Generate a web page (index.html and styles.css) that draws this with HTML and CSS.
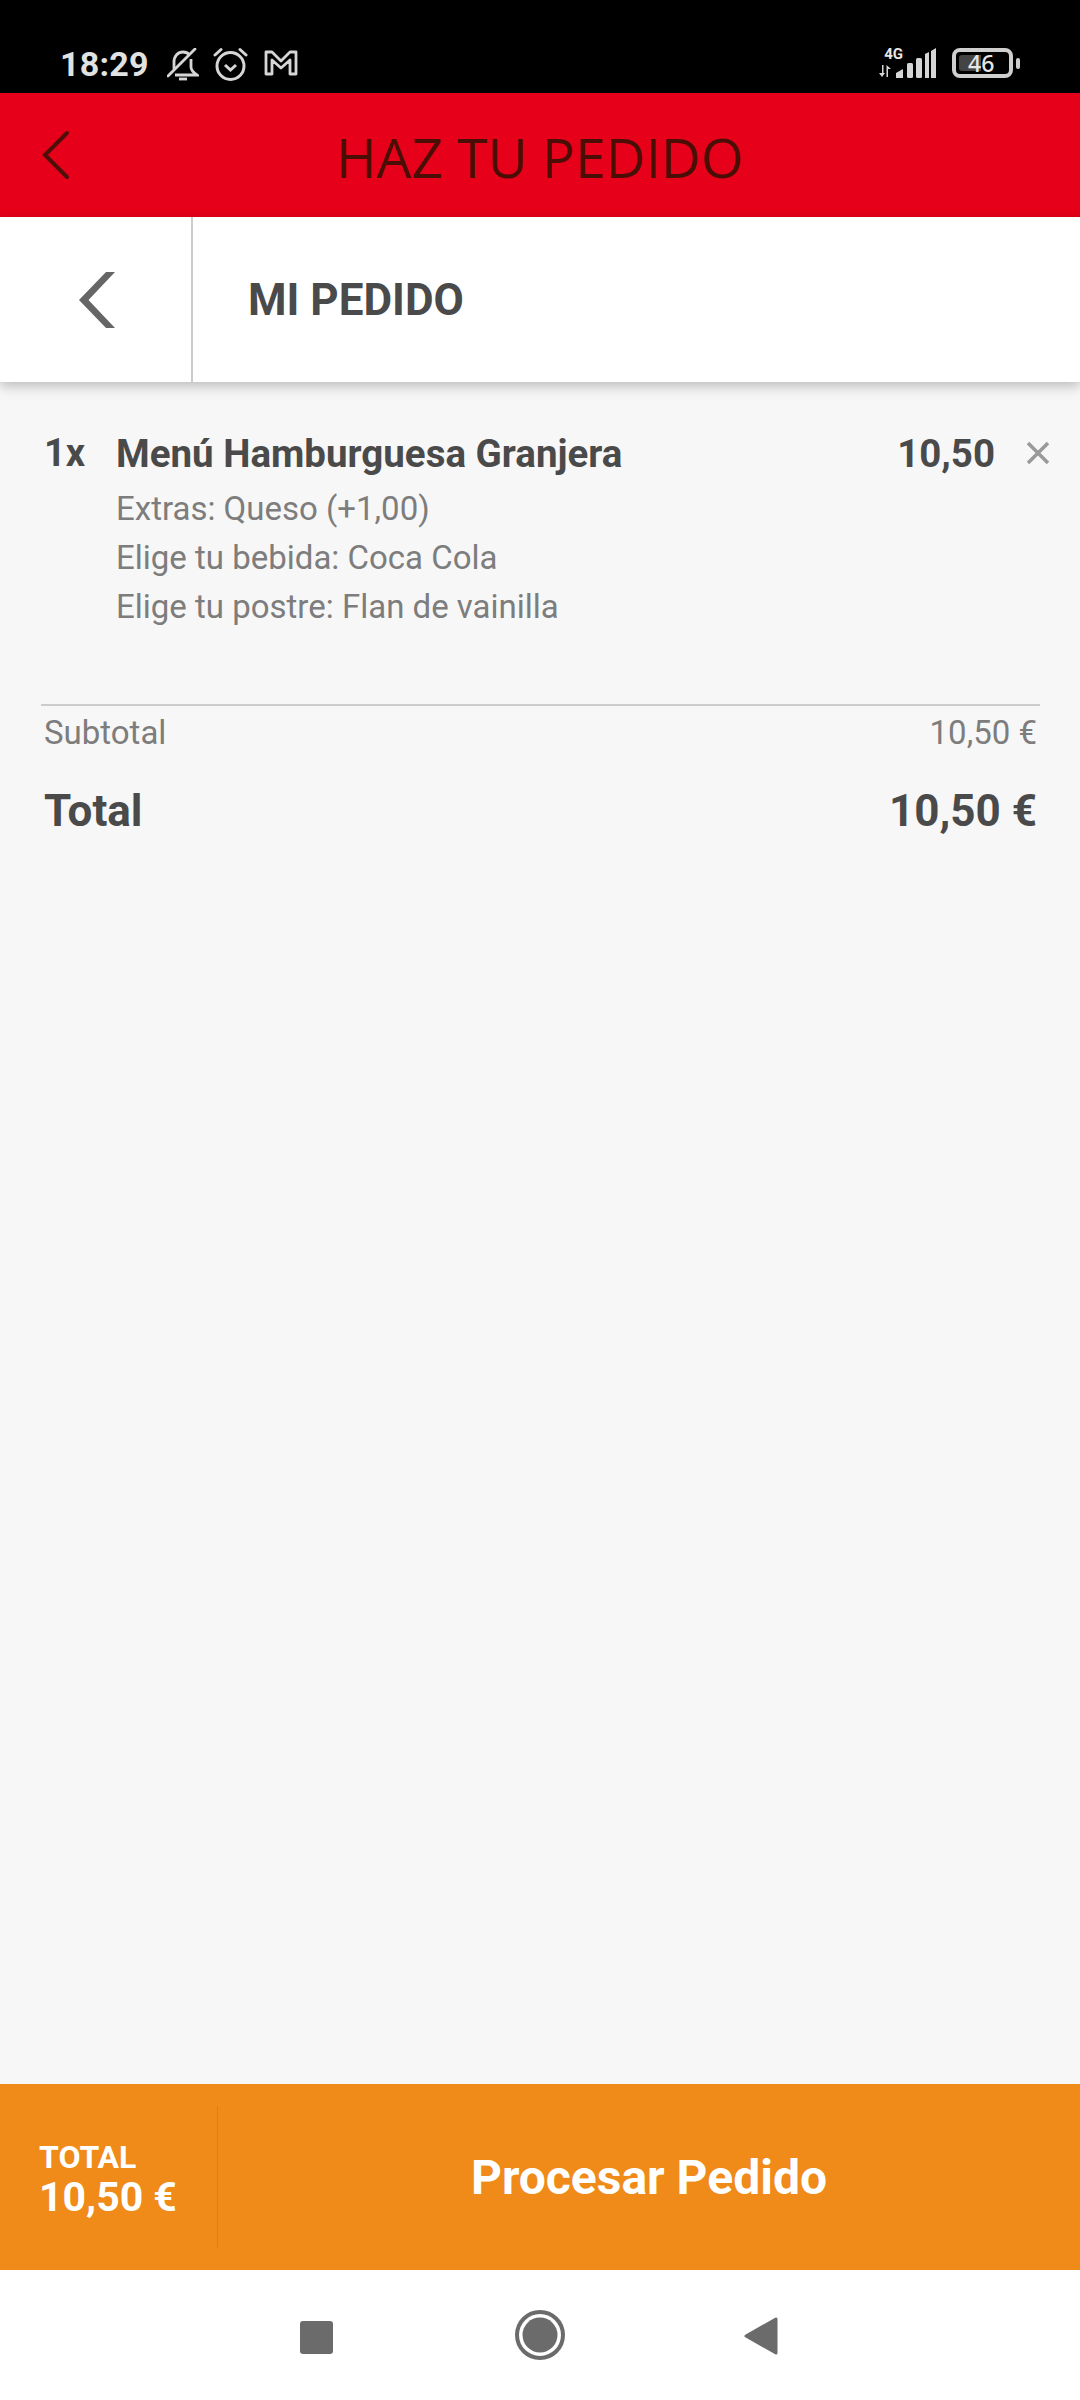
FILE: index.html
```html
<!DOCTYPE html>
<html lang="es">
<head>
<meta charset="UTF-8">
<meta name="viewport" content="width=device-width, initial-scale=1.0">
<title>Mi pedido</title>
<link rel="stylesheet" href="styles.css">
</head>
<body>

<div class="app">

<!-- Status bar -->
<div class="status-bar">
  <span class="time">18:29</span>
  <svg class="st-icon st-bell" width="32" height="33" viewBox="0 0 32 33" fill="none" stroke="#d6d6d6" stroke-width="2.8">
    <path d="M7 21 V14 C7 8 11 4 16 4 C19 4 21 5 23 7"/>
    <path d="M24 11 V19 C24 22 27 25 30 27 H8"/>
    <path d="M12 31 H20" stroke-width="2.8"/>
    <path d="M1 28 L28 1" stroke-linecap="round"/>
  </svg>
  <svg class="st-icon st-alarm" width="35" height="34" viewBox="0 0 35 34" fill="none" stroke="#d6d6d6" stroke-width="3">
    <circle cx="17.500" cy="19" r="13.500"/>
    <path d="M12 18 L17.500 23 L23 18"/>
    <path d="M2 8 L8 2.500 M27 2.500 L33 8" stroke-linecap="round"/>
  </svg>
  <svg class="st-icon st-m" width="34" height="26" viewBox="0 0 34 26" fill="none" stroke="#d6d6d6" stroke-width="2.8" stroke-linejoin="round">
    <path d="M2 2 H8 L17 11 L26 2 H32 V24 H26 V10 L17 18 L8 10 V24 H2 Z"/>
  </svg>
  <div class="spacer"></div>
  <div class="net">
    <span class="net-type">4G</span>
    <svg width="12" height="12" viewBox="0 0 12 12" fill="#d6d6d6">
      <path d="M3 0 H4.500 V8 H6 L3 12 L0 8 H3 Z M7.500 12 V0 L12 4 H9 V12 Z"/>
    </svg>
  </div>
  <svg class="signal" width="40" height="30" viewBox="0 0 40 30" fill="#d6d6d6">
    <path d="M0 30 V25 L7 21 V30 Z"/>
    <rect x="11" y="15" width="6" height="15" rx="1.500"/>
    <rect x="20" y="10" width="6" height="20" rx="1.500"/>
    <path d="M29 6 L33 4 V30 H29 Z M35 3 L40 0 V30 H35 Z"/>
  </svg>
  <div class="battery">
    <div class="battery-body">
      <div class="battery-fill"></div>
      <span class="battery-num">46</span>
    </div>
    <div class="battery-nub"></div>
  </div>
</div>

<!-- Top Bar with Title and Button -->
<div class="top-bar">
  <svg class="top-back" width="28" height="50" viewBox="0 0 28 50" fill="none" stroke="#4f0f08" stroke-width="4" stroke-linecap="round">
    <path d="M25 3 L3 25 L25 47"/>
  </svg>
  <h1 class="title">HAZ TU PEDIDO</h1>
</div>

<!-- Sub header -->
<div class="sub-bar">
  <div class="sub-back">
    <svg width="36" height="56" viewBox="0 0 36 56" fill="#666666">
      <path d="M27 0 H36 L9.500 28 L36 56 H27 L0 28 Z"/>
    </svg>
  </div>
  <h2 class="sub-title">MI PEDIDO</h2>
</div>

<!-- Order -->
<div class="order">
  <div class="item">
    <span class="item-qty">1x</span>
    <div class="item-info">
      <div class="item-name">Menú Hamburguesa Granjera</div>
      <div class="item-extra">Extras: Queso (+1,00)</div>
      <div class="item-extra">Elige tu bebida: Coca Cola</div>
      <div class="item-extra">Elige tu postre: Flan de vainilla</div>
    </div>
    <span class="item-price">10,50</span>
    <svg class="item-remove" width="24" height="24" viewBox="0 0 24 24" stroke="#999999" stroke-width="3.5">
      <path d="M2 2 L22 22 M22 2 L2 22"/>
    </svg>
  </div>

  <div class="totals">
    <div class="sub-row"><span>Subtotal</span><span>10,50 €</span></div>
    <div class="total-row"><span>Total</span><span>10,50 €</span></div>
  </div>
</div>

<!-- Checkout -->
<div class="checkout">
  <div class="checkout-total">
    <div class="checkout-label">TOTAL</div>
    <div class="checkout-amount">10,50 €</div>
  </div>
  <div class="checkout-btn">Procesar Pedido</div>
</div>

<!-- Android nav -->
<div class="nav-bar">
  <div class="nav-square"></div>
  <svg width="50" height="50" viewBox="0 0 50 50">
    <circle cx="25" cy="25" r="23" fill="none" stroke="#6b6b6b" stroke-width="4"/>
    <circle cx="25" cy="25" r="17.500" fill="#6b6b6b"/>
  </svg>
  <svg class="nav-back" width="34" height="38" viewBox="0 0 34 38" fill="#6b6b6b" stroke="#6b6b6b" stroke-width="3" stroke-linejoin="round">
    <path d="M2 19 L32 2 V36 Z"/>
  </svg>
</div>

</div>

</body>
</html>
```

FILE: styles.css
```css
* {
box-sizing: border-box;
}

body {
margin: 0;
font-family: Roboto, "Liberation Sans", sans-serif;
background-color: #f7f7f7;
}

.app {
display: flex;
flex-direction: column;
width: 1080px;
height: 2400px;
overflow: hidden;
}

/* Status bar */
.status-bar {
display: flex;
align-items: flex-start;
flex: 0 0 93px;
background-color: #000;
padding: 47px 60px 0 60px;
}

.time {
font-size: 34px;
font-weight: 700;
line-height: 34px;
letter-spacing: 0.2px;
color: #e2e2e2;
}

.st-bell {
margin: 1px 0 0 18px;
}

.st-alarm {
margin: 0 0 0 14px;
}

.st-m {
margin: 3px 0 0 16px;
}

.spacer {
flex: 1;
}

.net {
display: flex;
flex-direction: column;
align-items: flex-end;
width: 24px;
margin-top: -1px;
}

.net-type {
font-size: 15px;
font-weight: 700;
line-height: 17px;
color: #e6e6e6;
margin-bottom: 2px;
}

.net svg {
align-self: flex-start;
}

.signal {
margin: 1px 0 0 -7px;
}

.battery {
display: flex;
align-items: center;
margin: 1px 0 0 16px;
}

.battery-body {
display: flex;
align-items: center;
width: 61px;
height: 30px;
border: 4px solid #cfcfcf;
border-radius: 8px;
padding: 0 3px;
}

.battery-fill {
width: 22px;
height: 16px;
background-color: #444;
border-radius: 3px 0 0 3px;
}

.battery-num {
font-family: "Noto Sans", sans-serif;
font-size: 23px;
font-weight: 500;
line-height: 22px;
color: #e6e6e6;
margin-left: -13px;
}

.battery-nub {
width: 4px;
height: 11px;
margin-left: 3px;
background-color: #cfcfcf;
border-radius: 2px;
}

/* Red top bar */
.top-bar {
display: flex;
align-items: center;
flex: 0 0 124px;
background-color: #e60019;
padding-left: 42px;
}

.top-back {
flex: none;
}

.title {
flex: 1;
margin: 3px 70px 0 0;
text-align: center;
font-family: "Open Sans", sans-serif;
font-size: 55px;
font-weight: 400;
color: #4a0e07;
}

/* White sub header */
.sub-bar {
display: flex;
align-items: stretch;
flex: 0 0 165px;
background-color: #fff;
box-shadow: 0 4px 12px rgba(0, 0, 0, 0.25);
}

.sub-back {
display: flex;
align-items: center;
width: 193px;
padding-left: 79px;
border-right: 2px solid #cccccc;
}

.sub-title {
align-self: center;
margin: 0 0 0 55px;
font-size: 44px;
font-weight: 700;
color: #4a4a4a;
}

/* Order */
.order {
flex: 1;
padding: 47px 40px 0 41px;
}

.item {
display: flex;
align-items: flex-start;
padding-left: 3px;
}

.item-qty {
width: 72px;
font-size: 38px;
font-weight: 700;
line-height: 49px;
color: #4a4a4a;
}

.item-info {
flex: 1;
}

.item-name {
font-size: 38.500px;
font-weight: 700;
line-height: 49px;
color: #4a4a4a;
margin-bottom: 6px;
}

.item-extra {
font-size: 33px;
line-height: 49px;
color: #7d7d7d;
}

.item-price {
font-size: 38.500px;
font-weight: 700;
line-height: 49px;
color: #4a4a4a;
}

.item-remove {
margin: 12px -10px 0 31px;
}

.totals {
margin-top: 73px;
border-top: 2px solid #cccccc;
padding: 5px 3px 0;
}

.sub-row,
.total-row {
display: flex;
justify-content: space-between;
}

.sub-row {
font-size: 33px;
line-height: 44px;
color: #7d7d7d;
}

.total-row {
margin-top: 28px;
font-size: 44px;
font-weight: 700;
line-height: 56px;
color: #4a4a4a;
}

/* Checkout */
.checkout {
display: flex;
align-items: center;
flex: 0 0 186px;
background-color: #f08a18;
color: #fff;
}

.checkout-total {
width: 218px;
height: 142px;
padding: 33px 0 0 39px;
border-right: 1px solid #dd7f14;
}

.checkout-label {
font-size: 32px;
font-weight: 700;
line-height: 36px;
}

.checkout-amount {
font-size: 41px;
font-weight: 700;
line-height: 44px;
}

.checkout-btn {
flex: 1;
text-align: center;
font-size: 48px;
font-weight: 700;
}

/* Nav bar */
.nav-bar {
display: flex;
align-items: center;
justify-content: center;
gap: 182px;
flex: 0 0 130px;
background-color: #fff;
}

.nav-square {
width: 33px;
height: 33px;
background-color: #6b6b6b;
border-radius: 3px;
margin-top: 4px;
}

.nav-back {
margin: 2px 3px 0 -3px;
}
```
